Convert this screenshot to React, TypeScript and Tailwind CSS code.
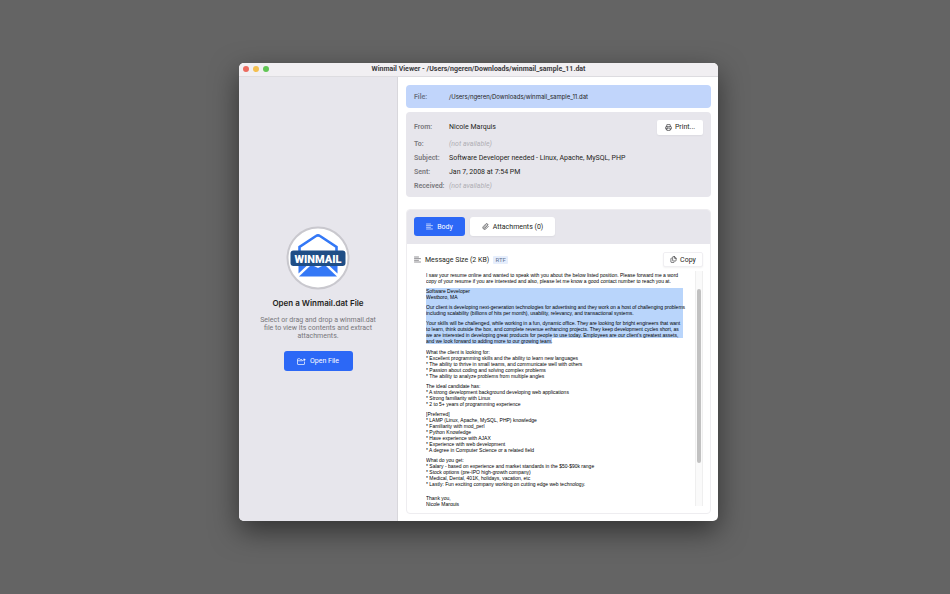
import React, { useState } from 'react';
import { Printer, Paperclip, Files } from 'lucide-react';

interface Field {
  label: string;
  value?: string;
}

const fields: Field[] = [
  { label: 'To:' },
  { label: 'Subject:', value: 'Software Developer needed - Linux, Apache, MySQL, PHP' },
  { label: 'Sent:', value: 'Jan 7, 2008 at 7:54 PM' },
  { label: 'Received:' },
];

const intro = [
  'I saw your resume online and wanted to speak with you about the below listed position. Please forward me a word',
  'copy of your resume if you are interested and also, please let me know a good contact number to reach you at.',
];

const selected = [
  ['Software Developer', 'Westboro, MA'],
  [
    'Our client is developing next-generation technologies for advertising and they work on a host of challenging problems',
    'including scalability (billions of hits per month), usability, relevancy, and transactional systems.',
  ],
  [
    'Your skills will be challenged, while working in a fun, dynamic office. They are looking for bright engineers that want',
    'to learn, think outside the box, and complete revenue enhancing projects. They keep development cycles short, as',
    "we are interested in developing great products for people to use today. Employees are our client's greatest assets,",
  ],
];

const rest = [
  [
    'What the client is looking for:',
    '* Excellent programming skills and the ability to learn new languages',
    '* The ability to thrive in small teams, and communicate well with others',
    '* Passion about coding and solving complex problems',
    '* The ability to analyze problems from multiple angles',
  ],
  [
    'The ideal candidate has:',
    '* A strong development background developing web applications',
    '* Strong familiarity with Linux',
    '* 2 to 5+ years of programming experience',
  ],
  [
    '[Preferred]',
    '* LAMP (Linux, Apache, MySQL, PHP) knowledge',
    '* Familiarity with mod_perl',
    '* Python Knowledge',
    '* Have experience with AJAX',
    '* Experience with web development',
    '* A degree in Computer Science or a related field',
  ],
  [
    'What do you get:',
    '* Salary - based on experience and market standards in the $50-$90k range',
    '* Stock options (pre-IPO high-growth company)',
    '* Medical, Dental, 401K, holidays, vacation, etc',
    '* Lastly: Fun exciting company working on cutting edge web technology.',
  ],
];

const Lines: React.FC<{ lines: string[] }> = ({ lines }) => (
  <p className="whitespace-nowrap">
    {lines.map((line) => (
      <span key={line} className="block">{line}</span>
    ))}
  </p>
);

const TextIcon: React.FC<{ className?: string }> = ({ className }) => (
  <svg viewBox="0 0 14 14" className={className} fill="none" stroke="currentColor" strokeWidth="1.3" strokeLinecap="round">
    <path d="M1 2h8M1 5.3h12M1 8.6h8M1 12h12" />
  </svg>
);

const OpenIcon: React.FC = () => (
  <svg viewBox="0 0 18 14" className="h-[7px] w-[9px]" fill="none" stroke="currentColor" strokeWidth="1.4" strokeLinejoin="round">
    <path d="M10 3H7L5.5 1.5H2A1 1 0 0 0 1 2.5V12a1 1 0 0 0 1 1h12a1 1 0 0 0 1-1V7M1 5.5h10" />
    <path d="M11 6c0-1.700 1.200-2.500 3-2.500" />
    <path d="M13.500 0.500l4 3-4 3z" fill="currentColor" stroke="none" />
  </svg>
);

const Logo: React.FC = () => (
  <svg viewBox="0 0 64 64" className="size-16" role="img" aria-label="Winmail">
    <circle cx="32" cy="32" r="30.500" fill="#fff" stroke="#c9c8ce" strokeWidth="2" />
    <path d="M13.500 26V21L30 10q2-1.400 4 0L50.500 21V26" fill="none" stroke="#3478f6" strokeWidth="2.600" />
    <path d="M12.500 40h8l-8 7.500zM51.500 40h-8l8 7.500z" fill="#3478f6" />
    <path d="M24 40h16l11 10.500H13z" fill="#3478f6" />
    <path d="M28 40l4 2 4-2z" fill="#fff" />
    <rect x="4.500" y="24.500" width="55" height="15.500" rx="3" fill="#1f4e86" />
    <text x="32" y="36.500" textAnchor="middle" fontSize="11" fontWeight="900" fill="#fff">WINMAIL</text>
  </svg>
);

const App: React.FC = () => {
  const [tab, setTab] = useState<'body' | 'attachments'>('body');

  return (
    <div className="flex h-screen bg-[#646464] pt-[63px] pr-[232px] pb-[73px] pl-[239px] font-[Roboto,sans-serif] text-[7px] leading-[8px] text-[#1f1f22]">
      <div className="flex min-w-0 flex-1 flex-col overflow-hidden rounded-[5px] bg-white shadow-[0_10px_28px_rgba(0,0,0,0.5)]">
        <header className="relative flex h-[14px] shrink-0 justify-center border-b border-[#dddce0] bg-[#f1eff2] pt-[2px]">
          <div className="absolute top-[3px] left-1 flex gap-1">
            <span className="size-[6px] rounded-full bg-[#ec6a5e]" />
            <span className="size-[6px] rounded-full bg-[#f4bf4f]" />
            <span className="size-[6px] rounded-full bg-[#61c554]" />
          </div>
          <h1 className="font-bold text-[#3c3b3e]">Winmail Viewer - /Users/ngeren/Downloads/winmail_sample_11.dat</h1>
        </header>

        <div className="flex min-h-0 flex-1">
          <aside className="flex w-[159px] shrink-0 flex-col items-center border-r border-[#d8d7dc] bg-[#e7e6ec] pt-[149px] text-center">
            <Logo />
            <h2 className="mt-2 font-[Inter,sans-serif] text-[8px] leading-[10px] font-semibold">Open a Winmail.dat File</h2>
            <p className="mt-2 w-[118px] text-[#77767b]">
              Select or drag and drop a winmail.dat file to view its contents and extract attachments.
            </p>
            <button className="mt-[11px] flex h-5 w-[69px] items-center justify-center gap-1 rounded-[3px] bg-[#2c68f6] text-white">
              <OpenIcon />
              Open File
            </button>
          </aside>

          <main className="flex min-w-0 flex-1 flex-col pt-2 pr-[7px] pb-[7px] pl-2">
            <section className="flex h-[23px] shrink-0 items-center rounded-[4px] bg-[#c1d5fb] px-2">
              <span className="w-[35px] font-semibold text-[#6a7284]">File:</span>
              <span className="font-[Inter,sans-serif] text-[6px]">/Users/ngeren/Downloads/winmail_sample_11.dat</span>
            </section>

            <section className="mt-1 shrink-0 rounded-[4px] bg-[#e7e6ec] px-2 pt-[5px] pb-1">
              <div className="flex h-5 items-center">
                <span className="w-[35px] font-semibold text-[#77767b]">From:</span>
                <span>Nicole Marquis</span>
                <button className="ml-auto flex h-[15px] w-[46px] items-center justify-center gap-[3px] rounded-[2px] bg-white shadow-xs">
                  <Printer size={7} />
                  Print...
                </button>
              </div>
              {fields.map((field) => (
                <div key={field.label} className="flex h-[14px] items-center">
                  <span className="w-[35px] font-semibold text-[#77767b]">{field.label}</span>
                  {field.value ? <span>{field.value}</span> : <span className="text-[#b0afb4] italic">(not available)</span>}
                </div>
              ))}
            </section>

            <section className="mt-3 flex min-h-0 flex-1 flex-col overflow-hidden rounded-[4px] border border-[#eeedf0]">
              <div className="flex h-[34px] shrink-0 gap-[5px] bg-[#e7e6ec] px-[7px] pt-[7px]">
                <button
                  onClick={() => setTab('body')}
                  className="flex h-[19px] w-[51px] items-center justify-center gap-1 rounded-[3px] bg-[#2c68f6] text-white"
                >
                  <TextIcon className="size-[7px]" />
                  Body
                </button>
                <button
                  onClick={() => setTab('attachments')}
                  className="flex h-[19px] w-[85px] items-center justify-center gap-1 rounded-[3px] bg-white shadow-xs"
                >
                  <Paperclip size={7} />
                  Attachments (0)
                </button>
              </div>

              {tab === 'body' && (
                <div className="flex min-h-0 flex-1 flex-col px-[7px] pt-2 pb-[7px]">
                  <div className="flex h-[15px] shrink-0 items-center">
                    <TextIcon className="size-[7px] text-[#55545a]" />
                    <span className="ml-1">Message Size (2 KB)</span>
                    <span className="ml-1 flex h-2 w-[15px] items-center justify-center rounded-[1px] bg-[#e6eefc] text-[6px] text-[#5f7396]">RTF</span>
                    <button className="ml-auto flex h-[15px] w-10 items-center justify-center gap-[3px] rounded-[2px] border border-[#f0eff2] bg-white shadow-xs">
                      <Files size={7} />
                      Copy
                    </button>
                  </div>

                  <div className="mt-1 ml-3 flex min-h-0 flex-1">
                    <article className="min-w-0 flex-1 overflow-hidden pt-[1px] font-['Liberation_Sans',sans-serif] text-[5px] leading-[6px] text-black">
                      <Lines lines={intro} />
                      <div className="mt-1 mr-3 flex flex-col gap-1 bg-[#b9d5fb]">
                        {selected.map((lines) => (
                          <Lines key={lines[0]} lines={lines} />
                        ))}
                      </div>
                      <p className="w-fit bg-[#b9d5fb]">and we look forward to adding more to our growing team.</p>
                      <div className="mt-[5px] flex flex-col gap-1">
                        {rest.map((lines) => (
                          <Lines key={lines[0]} lines={lines} />
                        ))}
                      </div>
                      <div className="mt-2">
                        <Lines lines={['Thank you,', 'Nicole Marquis']} />
                      </div>
                    </article>
                    <div className="w-2 shrink-0 border-x border-[#efefef] bg-[#fafafa] px-[1px] pt-[18px]">
                      <div className="h-4/5 rounded-full bg-[#c1c1c1]" />
                    </div>
                  </div>
                </div>
              )}
            </section>
          </main>
        </div>
      </div>
    </div>
  );
};

export default App;
